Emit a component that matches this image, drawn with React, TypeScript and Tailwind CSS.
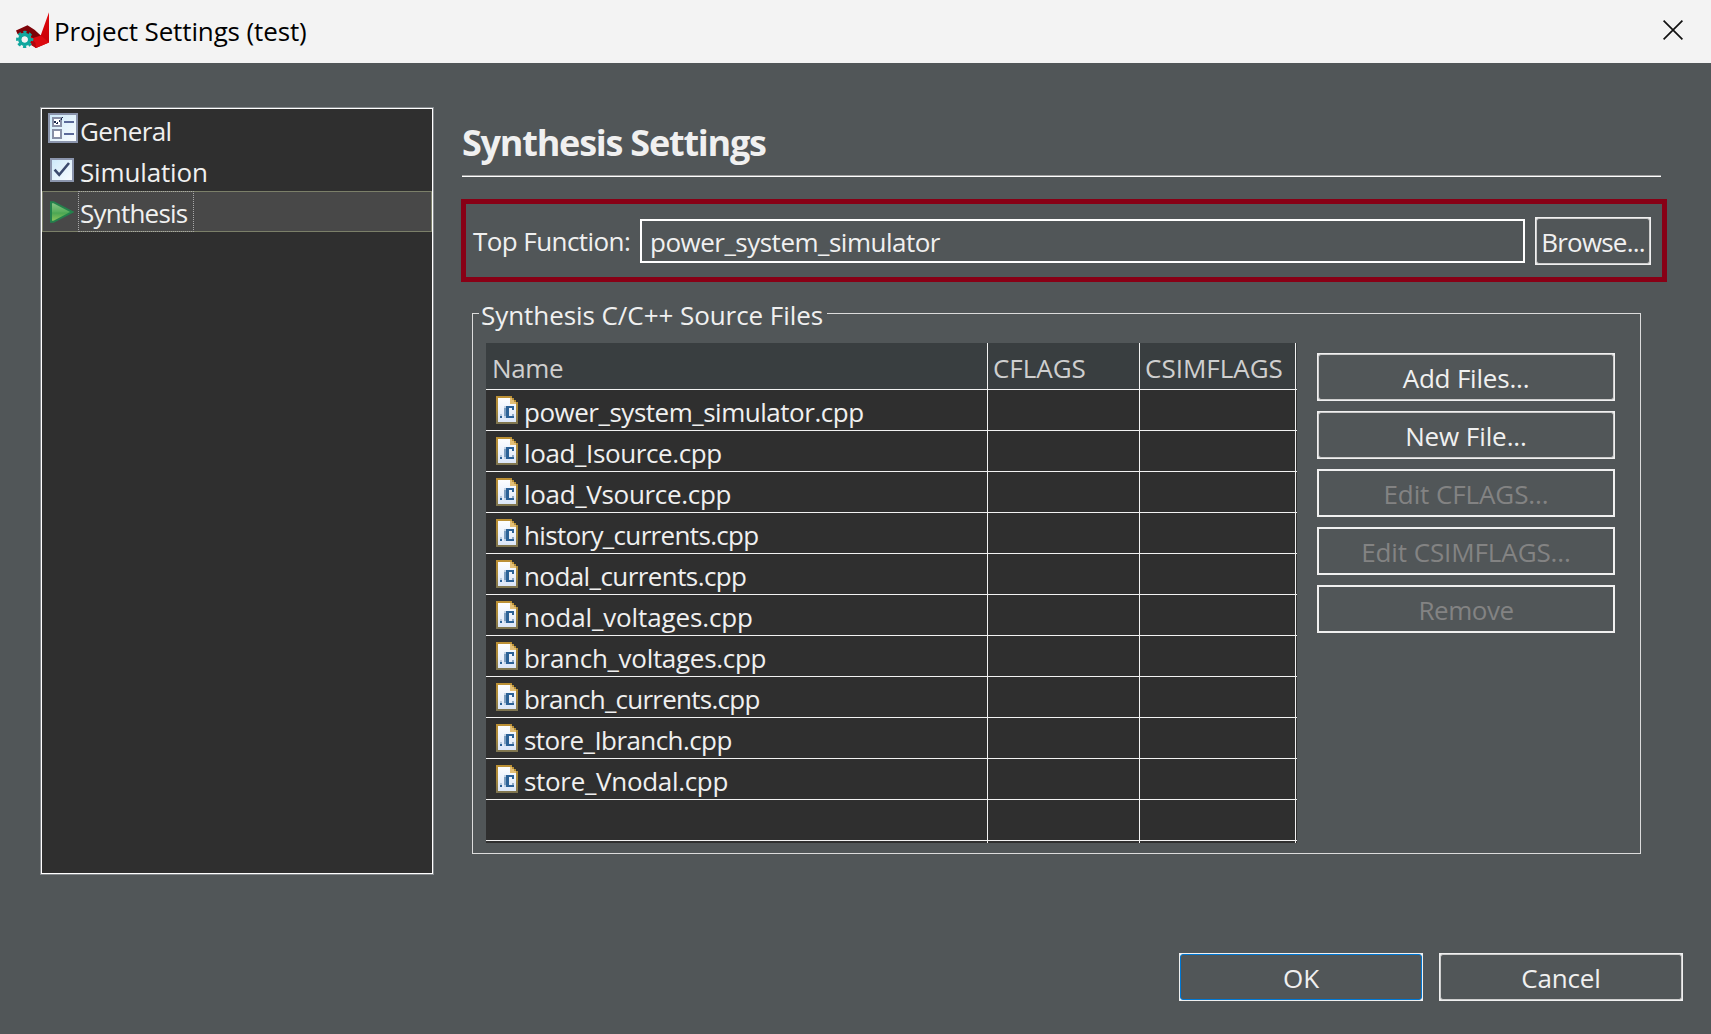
import type { ReactNode } from "react";

function AppLogo() {
  return (
    <svg width="36" height="40" viewBox="14 10 36 40" className="shrink-0">
      <defs>
        <linearGradient id="logoRed" x1="0" y1="0" x2="0" y2="1">
          <stop offset="0" stopColor="#e0080c" />
          <stop offset="1" stopColor="#c40008" />
        </linearGradient>
      </defs>
      <path d="M49 12.3V42.5L36 48L29 42L33 33L40.7 35.4Z" fill="url(#logoRed)" />
      <path d="M40.7 35.2L49 42.5L36 48L31 44L30 32Z" fill="#dc0a10" />
      <path d="M16 30.6L27.5 25.3L34.5 29.8L40.8 35.4L33 38L29 35L24 33.5L17.5 34Z" fill="#7d0208" />
      <path d="M31 38L35.5 43L36 48L31 45Z" fill="#b5040a" />
      <circle cx="24.7" cy="39.4" r="4.8" fill="none" stroke="#0fa79e" strokeWidth="3.6" />
      <circle cx="24.7" cy="39.4" r="7.3" fill="none" stroke="#0fa79e" strokeWidth="2.6" strokeDasharray="3.2 2.533" strokeDashoffset="1.6" />
      <circle cx="24.7" cy="39.4" r="3" fill="#f3f3f3" />
    </svg>
  );
}

function GeneralIcon() {
  return (
    <svg width="30" height="30" viewBox="0 0 30 30" shapeRendering="crispEdges" className="mb-[2px]">
      <defs>
        <linearGradient id="panelBlue" x1="0" y1="0" x2="1" y2="1">
          <stop offset="0" stopColor="#cbe9fa" />
          <stop offset="1" stopColor="#fbfdff" />
        </linearGradient>
      </defs>
      <rect x="1" y="1" width="28" height="28" fill="url(#panelBlue)" stroke="#8b95ad" strokeWidth="2" />
      <rect x="5" y="5" width="8" height="8" fill="#fff" stroke="#878fa6" strokeWidth="2" />
      <rect x="5" y="17" width="8" height="8" fill="#fff" stroke="#878fa6" strokeWidth="2" />
      <path d="M6 8h2v2h1v-1h2v-2h2v-2h2v-1h-1v3h-2v2h-2v2h-2v-1h-2z" fill="#1c2b50" />
      <path d="M16 8h10v2H16zM16 20h10v2H16z" fill="#5b6a9a" />
    </svg>
  );
}

function CheckIcon() {
  return (
    <svg width="24" height="24" viewBox="0 0 24 24" className="ml-[2px]">
      <rect x="1" y="1" width="22" height="22" fill="url(#panelBlue)" stroke="#8b95ad" strokeWidth="2" />
      <path d="M4.6 11.6L9.2 16.8L19 5" fill="none" stroke="#3b4a6e" strokeWidth="2.6" />
    </svg>
  );
}

function RunIcon() {
  return (
    <svg width="24" height="22" viewBox="0 0 24 22" className="mt-[2px] ml-[2px]">
      <defs>
        <linearGradient id="runGreen" x1="0" y1="0" x2="0" y2="1">
          <stop offset="0" stopColor="#8cc78a" />
          <stop offset="0.5" stopColor="#57ad5c" />
          <stop offset="0.55" stopColor="#4ba653" />
          <stop offset="1" stopColor="#93c85c" />
        </linearGradient>
      </defs>
      <path d="M1 1.2H3.5L22.5 11L3.5 20.8H1Z" fill="url(#runGreen)" stroke="#24804c" strokeWidth="2" />
    </svg>
  );
}

function CFileIcon() {
  return (
    <svg width="22" height="28" viewBox="0 0 22 28" shapeRendering="crispEdges" className="shrink-0">
      <defs>
        <linearGradient id="fileEdge" x1="0" y1="0" x2="0" y2="1">
          <stop offset="0" stopColor="#bd9135" />
          <stop offset="0.5" stopColor="#a98a3c" />
          <stop offset="1" stopColor="#7d7450" />
        </linearGradient>
        <linearGradient id="filePage" x1="0" y1="0" x2="0" y2="1">
          <stop offset="0" stopColor="#fdfeff" />
          <stop offset="1" stopColor="#dbe6f8" />
        </linearGradient>
      </defs>
      <path d="M0 0H16V2H18V4H20V6H22V28H0Z" fill="url(#fileEdge)" />
      <path d="M2 2H14V8H20V26H2Z" fill="url(#filePage)" />
      <path d="M14 2H16V4H18V6H20V8H14Z" fill="#e3bf76" />
      <path d="M4 20h2v2H4z" fill="#2b6196" />
      <path d="M4 18h2v2H4z" fill="#b9c9dc" />
      <path d="M8 12h2v8H8z" fill="#7f9fc0" />
      <path d="M10 10h8v4h-2v-2h-3v8h3v-2h2v4h-8z" fill="#2b6196" />
      <path d="M16 18h2v2h-2z" fill="#8fa9c4" />
      <path d="M8 10h2v2H8zM8 20h2v2H8z" fill="#c3d2e4" />
    </svg>
  );
}

type TreeItemProps = { label: string; tracking: string; icon: ReactNode; selected?: boolean };

function TreeItem({ label, tracking, icon, selected }: TreeItemProps) {
  return (
    <div
      className={
        selected
          ? "flex h-[41px] border border-[#7b7f69] bg-[#484848] pl-[5px]"
          : "flex h-[41px] border border-transparent pl-[5px]"
      }
    >
      <div className="flex w-[30px] items-center pb-px">{icon}</div>
      <div
        className={
          selected
            ? "-my-px flex w-[116px] items-center border border-dotted border-[#a8a8a8] pl-px pt-[2px]"
            : "-my-px flex items-center pl-[2px] pt-[2px]"
        }
      >
        <span className={tracking}>{label}</span>
      </div>
    </div>
  );
}

function PushButton({ children, className, disabled, primary }: { children: ReactNode; className: string; disabled?: boolean; primary?: boolean }) {
  const edge = disabled ? "border-[#f0f0f0]" : primary ? "border-[#0078d4]" : "border-[#cdcdcd]";
  return (
    <button type="button" disabled={disabled} className={`flex shrink-0 bg-[#f0f0f0] p-px ${className}`}>
      <span
        className={`flex size-full items-center justify-center border bg-[#515658] pt-[2px] ${disabled ? "text-[#838383]" : "rounded-[3px]"} ${edge}`}
      >
        {children}
      </span>
    </button>
  );
}

const files = [
  { name: "power_system_simulator.cpp", tracking: "tracking-[-0.48px]" },
  { name: "load_Isource.cpp", tracking: "tracking-[-0.38px]" },
  { name: "load_Vsource.cpp", tracking: "tracking-[-0.32px]" },
  { name: "history_currents.cpp", tracking: "tracking-[-0.66px]" },
  { name: "nodal_currents.cpp", tracking: "tracking-[-0.58px]" },
  { name: "nodal_voltages.cpp", tracking: "tracking-[-0.12px]" },
  { name: "branch_voltages.cpp", tracking: "tracking-[-0.3px]" },
  { name: "branch_currents.cpp", tracking: "tracking-[-0.74px]" },
  { name: "store_Ibranch.cpp", tracking: "tracking-[-0.58px]" },
  { name: "store_Vnodal.cpp", tracking: "tracking-[-0.31px]" },
];

function Row({ cells, className }: { cells: [ReactNode, ReactNode, ReactNode]; className: string }) {
  return (
    <div className={`grid grid-cols-[502px_152px_156px] ${className}`}>
      {cells.map((cell, i) => (
        <div key={i} className="flex items-center border-r border-[#f2f2f2]">
          {cell}
        </div>
      ))}
    </div>
  );
}

function FileTable() {
  return (
    <div className="w-[811px] shrink-0 self-start bg-[#2f2f2f]">
      <Row
        className="h-[47px] border-b border-[#f2f2f2] bg-[#393e40] text-[#cfcfcf]"
        cells={[
          <span className="pl-[6px] pt-[4px] tracking-[-0.36px]">Name</span>,
          <span className="pl-[5px] pt-[4px] tracking-[-0.04px]">CFLAGS</span>,
          <span className="pl-[5px] pt-[4px]">CSIMFLAGS</span>,
        ]}
      />
      {files.map((f) => (
        <Row
          key={f.name}
          className="h-[41px] border-b border-[#f2f2f2]"
          cells={[
            <div className="flex items-center pl-[10px]">
              <CFileIcon />
              <span className={`-mb-px pl-[6px] pt-[3px] ${f.tracking}`}>{f.name}</span>
            </div>,
            null,
            null,
          ]}
        />
      ))}
      <Row className="h-[41px] border-b border-[#f2f2f2]" cells={[null, null, null]} />
      <Row className="h-[2px]" cells={[null, null, null]} />
    </div>
  );
}

export default function App() {
  return (
    <div className="flex h-[1034px] w-[1711px] flex-col overflow-hidden bg-[#515658] font-['Open_Sans',sans-serif] text-[26px] leading-[36px] whitespace-nowrap text-[#f0f0f0]">
      <header className="flex h-[63px] shrink-0 items-center bg-[#f3f3f3] pl-[14px] pr-[28px] text-black">
        <div className="pb-[3px]">
          <AppLogo />
        </div>
        <h1 className="pb-[2px] pl-[4px] tracking-[-0.13px]">Project Settings (test)</h1>
        <svg width="20" height="20" viewBox="0 0 20 20" className="mb-[3px] ml-auto">
          <path d="M0.6 0.6L19.4 19.4M19.4 0.6L0.6 19.4" stroke="#111" strokeWidth="1.7" fill="none" />
        </svg>
      </header>

      <main className="flex px-[40px] pt-[44px]">
        <nav className="h-[768px] w-[394px] shrink-0 border border-[#85898d]">
          <div className="h-full border border-white bg-[#2f2f2f]">
            <TreeItem label="General" tracking="tracking-[-0.6px]" icon={<GeneralIcon />} />
            <TreeItem label="Simulation" tracking="tracking-[-0.15px]" icon={<CheckIcon />} />
            <TreeItem label="Synthesis" tracking="tracking-[-0.77px]" icon={<RunIcon />} selected />
          </div>
        </nav>

        <section className="ml-[27px]">
          <h2 className="ml-px flex h-[68px] items-center pt-[4px] text-[36px] font-bold tracking-[-1.23px]">Synthesis Settings</h2>
          <div className="ml-px h-[2px] w-[1199px] border-t border-[#a0a0a0] bg-white" />

          <div className="mt-[22px] flex h-[83px] w-[1206px] items-center border-[5px] border-[#880015] pl-[7px]">
            <label className="w-[167px] tracking-[-0.57px]">Top Function:</label>
            <div className="flex h-[44px] w-[885px] items-center border-2 border-white pl-[8px] pt-[2px] tracking-[-0.5px]">
              power_system_simulator
            </div>
            <PushButton className="ml-[10px] h-[48px] w-[116px] tracking-[-0.8px]">Browse...</PushButton>
          </div>

          <div className="relative mt-[31px] ml-[11px] flex h-[541px] w-[1169px] border border-[#dcdcdc] pt-[29px] pl-[13px]">
            <div className="absolute -top-[17px] left-[6px] bg-[#515658] pr-[4px] pl-[2px] tracking-[-0.06px]">Synthesis C/C++ Source Files</div>
            <FileTable />
            <div className="mt-[10px] ml-[20px] flex flex-col gap-[10px]">
              <PushButton className="h-[48px] w-[298px] tracking-[-0.2px]">Add Files...</PushButton>
              <PushButton className="h-[48px] w-[298px] tracking-[-0.09px]">New File...</PushButton>
              <PushButton className="h-[48px] w-[298px] tracking-[-0.1px]" disabled>Edit CFLAGS...</PushButton>
              <PushButton className="h-[48px] w-[298px] tracking-[-0.1px]" disabled>Edit CSIMFLAGS...</PushButton>
              <PushButton className="h-[48px] w-[298px] tracking-[-0.47px]" disabled>Remove</PushButton>
            </div>
          </div>
        </section>
      </main>

      <footer className="mt-[78px] flex justify-end gap-[16px] pr-[28px]">
        <PushButton className="h-[48px] w-[244px]" primary>OK</PushButton>
        <PushButton className="h-[48px] w-[244px] tracking-[-0.16px]">Cancel</PushButton>
      </footer>
    </div>
  );
}
